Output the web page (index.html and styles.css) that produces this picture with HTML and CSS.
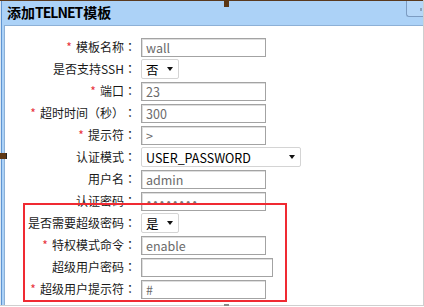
FILE: index.html
```html
<!DOCTYPE html>
<html lang="zh-CN">
<head>
<meta charset="utf-8">
<title>添加TELNET模板</title>
<link rel="stylesheet" href="styles.css">
</head>
<body>
<div class="panel">
  <div class="topline"></div>
  <div class="header">
    <span class="title">添加<span class="latin">TELNET</span>模板</span>
    <span class="close-btn"><span class="close-mark"></span></span>
  </div>
  <div class="body">
    <div class="form">
      <label class="lbl"><span class="req">*</span>模板名称<span class="colon">：</span></label>
      <div class="ctl"><input class="txt" value="wall" readonly></div>

      <label class="lbl">是否支持SSH<span class="colon">：</span></label>
      <div class="ctl"><div class="sel sel-sm"><span>否</span><span class="arrow"></span></div></div>

      <label class="lbl"><span class="req">*</span>端口<span class="colon">：</span></label>
      <div class="ctl"><input class="txt" value="23" readonly></div>

      <label class="lbl"><span class="req">*</span>超时时间（秒）<span class="colon">：</span></label>
      <div class="ctl"><input class="txt" value="300" readonly></div>

      <label class="lbl"><span class="req">*</span>提示符<span class="colon">：</span></label>
      <div class="ctl"><input class="txt" value="&gt;" readonly></div>

      <label class="lbl">认证模式<span class="colon">：</span></label>
      <div class="ctl"><div class="sel sel-lg"><span>USER_PASSWORD</span><span class="arrow"></span></div></div>

      <label class="lbl">用户名<span class="colon">：</span></label>
      <div class="ctl"><input class="txt" value="admin" readonly></div>

      <label class="lbl">认证密码<span class="colon">：</span></label>
      <div class="ctl"><div class="txt pwd">••••••••</div></div>

      <label class="lbl">是否需要超级密码<span class="colon">：</span></label>
      <div class="ctl"><div class="sel sel-sm"><span>是</span><span class="arrow"></span></div></div>

      <label class="lbl"><span class="req">*</span>特权模式命令<span class="colon">：</span></label>
      <div class="ctl"><input class="txt" value="enable" readonly></div>

      <label class="lbl">超级用户密码<span class="colon">：</span></label>
      <div class="ctl"><input class="txt txt-wide" value="" readonly></div>

      <label class="lbl"><span class="req">*</span>超级用户提示符<span class="colon">：</span></label>
      <div class="ctl"><input class="txt" value="#" readonly></div>
    </div>
  </div>
  <div class="highlight"></div>
  <div class="handle handle-top"></div>
  <div class="handle handle-left"></div>
  <div class="handle handle-bottom"></div>
</div>
</body>
</html>
```

FILE: styles.css
```css
html, body {
  margin: 0;
  padding: 0;
  background: #ffffff;
  overflow: hidden;
}

body {
  font-family: "Noto Sans CJK SC", "Noto Sans", sans-serif;
  font-size: 12px;
  color: #000;
}

.panel {
  position: relative;
  width: 423px;
  height: 305px;
  border-right: 1px solid #cfcfcf;
  border-bottom: 1px solid #cfcfcf;
  background: #acd2f7;
  display: flex;
  flex-direction: column;
}

.topline {
  height: 1px;
  background: #5a3a1e;
  flex: none;
}

.header {
  height: 24px;
  flex: none;
  display: flex;
  align-items: center;
  justify-content: space-between;
  box-shadow: inset 1px 0 0 #dbe6f1, inset 2px 0 0 #5f95d2;
}

.title {
  font-size: 14px;
  font-weight: bold;
  padding-left: 7px;
  line-height: 20px;
  margin-top: -2px;
}

.latin {
  letter-spacing: -1px;
  margin-right: 1px;
}

.close-btn {
  align-self: flex-start;
  width: 16px;
  height: 15px;
  border-left: 1px solid #7c9cc2;
  border-bottom: 1px solid #7c9cc2;
  border-bottom-left-radius: 3px;
  background: #b6d7f8;
  position: relative;
}

.close-mark {
  position: absolute;
  right: 1px;
  top: 7px;
  width: 2px;
  height: 3px;
  background: #8aa2bc;
}

.body {
  flex: 1;
  display: flex;
  box-shadow: inset 1px 0 0 #dbe6f1, inset 2px 0 0 #5f95d2;
  padding-left: 4px;
}

.form {
  flex: 1;
  background: #ffffff;
  border-left: 1px solid #8db0d6;
  border-top: 1px solid #8db0d6;
  padding-top: 10px;
  display: grid;
  grid-template-columns: 131px 1fr;
  grid-auto-rows: 22px;
  column-gap: 5px;
  align-content: start;
}

.lbl {
  display: flex;
  align-items: center;
  justify-content: flex-end;
  white-space: nowrap;
  color: #1a1a1a;
  line-height: 22px;
}

.colon {
  font-family: "Noto Sans CJK TC", "Noto Sans CJK SC", sans-serif;
}

.req {
  color: #e8333a;
  margin-right: 4px;
  font-size: 12px;
}

.ctl {
  display: flex;
  align-items: center;
}

.txt {
  box-sizing: border-box;
  width: 125px;
  height: 19px;
  margin: 0;
  padding: 0 4px;
  border: 1px solid #a3a3a3;
  box-shadow: inset 1px 1px 0 #dedede;
  background: #fff;
  font-family: "Noto Sans CJK SC", "Noto Sans", sans-serif;
  font-size: 12.5px;
  color: #6b6b6b;
  outline: none;
  line-height: 17px;
}

.txt-wide {
  width: 132px;
}

.pwd {
  font-family: "Liberation Sans", sans-serif;
  letter-spacing: 2.7px;
  font-size: 11px;
  line-height: 19px;
  color: #777;
  padding-left: 5px;
}

.sel {
  box-sizing: border-box;
  height: 20px;
  border: 1px solid #d4d4d4;
  border-radius: 2px;
  background: #fff;
  display: flex;
  align-items: center;
  justify-content: space-between;
  padding: 0 5px 0 4px;
  font-size: 12.5px;
  color: #000;
}

.sel-sm {
  width: 38px;
}

.sel-lg {
  width: 160px;
}

.arrow {
  width: 0;
  height: 0;
  border-left: 3.5px solid transparent;
  border-right: 3.5px solid transparent;
  border-top: 4px solid #111;
}

.highlight {
  position: absolute;
  left: 23px;
  top: 203px;
  width: 260px;
  height: 95px;
  border: 2px solid #f02a32;
  pointer-events: none;
}

.handle {
  position: absolute;
  background: #5c3714;
}

.handle-top {
  left: 224px;
  top: 0;
  width: 5px;
  height: 7px;
}

.handle-left {
  left: 0;
  top: 153px;
  width: 6px;
  height: 6px;
  border-right: 1px solid #222;
}

.handle-bottom {
  left: 224px;
  top: 304px;
  width: 5px;
  height: 3px;
  background: #888;
}
```
